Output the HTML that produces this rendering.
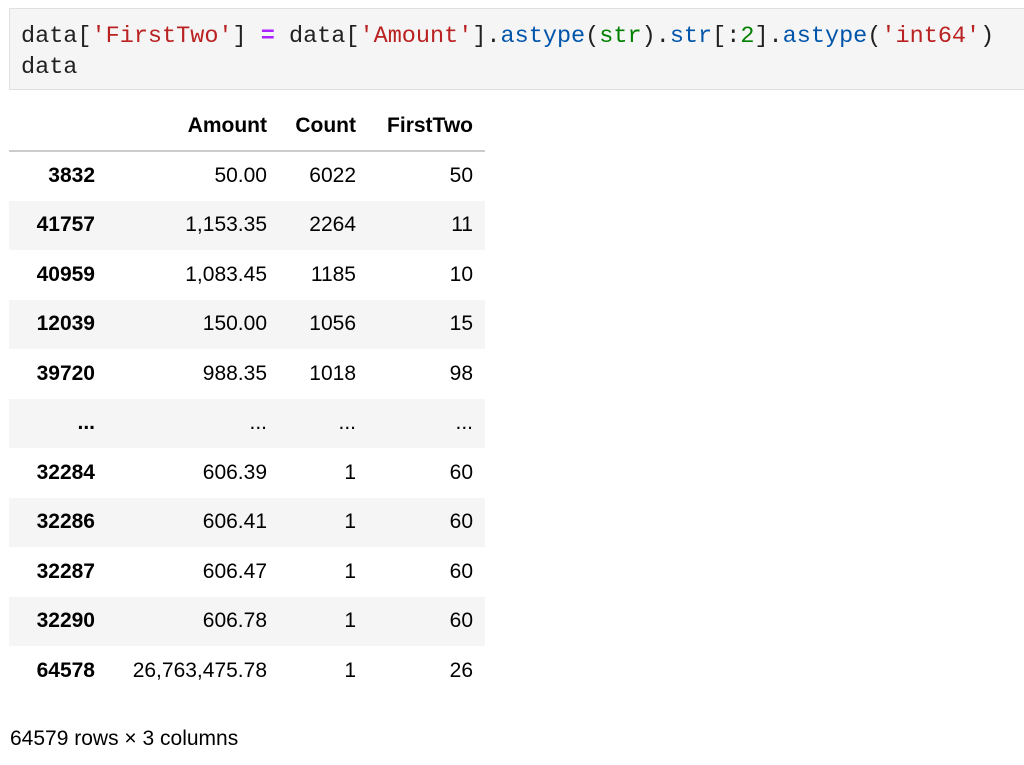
<!DOCTYPE html>
<html><head><meta charset="utf-8"><style>
body{margin:0;background:#fff;width:1024px;height:765px;overflow:hidden;font-family:"Liberation Sans",Arial,sans-serif;color:#000}
.code{position:absolute;left:9px;top:8px;width:1030px;height:82px;background:#f5f5f5;border:1px solid #e0e0e0;box-sizing:border-box;font-family:"Liberation Mono",monospace;font-size:23.5px;line-height:31px;padding:12px 0 0 11px;white-space:pre;color:#212121}
.s{color:#ba2121}.o{color:#aa22ff;font-weight:bold}.f{color:#0055aa}.b{color:#008000}.n{color:#008000}
table{position:absolute;left:9px;top:102px;border-collapse:collapse;font-size:21px}
td,th{height:49.5px;padding:0 12px;text-align:right;box-sizing:border-box}
th{font-weight:bold}
thead th{height:49px;border-bottom:2px solid #ccc}
tbody tr:nth-child(even){background:#f5f5f5}
.foot{position:absolute;left:10px;top:727px;font-size:21px}
</style></head><body>
<div class="code">data[<span class="s">'FirstTwo'</span>] <span class="o">=</span> data[<span class="s">'Amount'</span>].<span class="f">astype</span>(<span class="b">str</span>).<span class="f">str</span>[:<span class="n">2</span>].<span class="f">astype</span>(<span class="s">'int64'</span>)
data</div>
<table>
<colgroup><col style="width:98px"><col style="width:172px"><col style="width:89px"><col style="width:117px"></colgroup>
<thead><tr><th></th><th>Amount</th><th>Count</th><th>FirstTwo</th></tr></thead>
<tbody>
<tr><th>3832</th><td>50.00</td><td>6022</td><td>50</td></tr>
<tr><th>41757</th><td>1,153.35</td><td>2264</td><td>11</td></tr>
<tr><th>40959</th><td>1,083.45</td><td>1185</td><td>10</td></tr>
<tr><th>12039</th><td>150.00</td><td>1056</td><td>15</td></tr>
<tr><th>39720</th><td>988.35</td><td>1018</td><td>98</td></tr>
<tr><th>...</th><td>...</td><td>...</td><td>...</td></tr>
<tr><th>32284</th><td>606.39</td><td>1</td><td>60</td></tr>
<tr><th>32286</th><td>606.41</td><td>1</td><td>60</td></tr>
<tr><th>32287</th><td>606.47</td><td>1</td><td>60</td></tr>
<tr><th>32290</th><td>606.78</td><td>1</td><td>60</td></tr>
<tr><th>64578</th><td>26,763,475.78</td><td>1</td><td>26</td></tr>
</tbody></table>
<div class="foot">64579 rows × 3 columns</div>
</body></html>
